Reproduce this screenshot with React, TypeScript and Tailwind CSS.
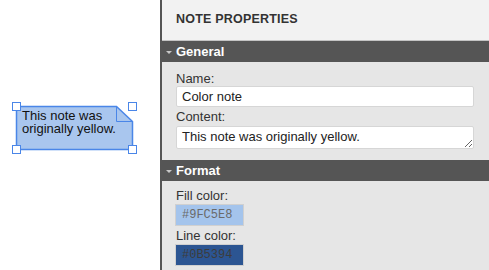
import React from 'react';

const font = { fontFamily: '"Liberation Sans", Arial, sans-serif' };
const mono = { fontFamily: '"Liberation Mono", "Courier New", monospace' };

const SectionBar = ({ title }: { title: string }) => (
  <div className="flex h-[21px] items-center bg-[#555555] pl-[3px]">
    <svg width="8" height="5" viewBox="0 0 8 5" className="mr-[3px] mt-[1px]">
      <path d="M1 1 L7 1 L4 4 Z" fill="#c8c8c8" />
    </svg>
    <span className="text-[13px] font-bold leading-none text-white">{title}</span>
  </div>
);

const NoteCanvas = () => (
  <div className="relative h-full w-[160px] bg-white">
    <svg width="160" height="270" className="absolute left-0 top-0">
      <path
        d="M16.5 106.5 L116.5 106.5 L132.5 121.5 L132.5 149.5 L16.5 149.5 Z"
        fill="#a9c6ee"
        stroke="#4a86e8"
        strokeWidth="1.5"
      />
      <path d="M116.5 106.5 L116.5 121.5 L132.5 121.5" fill="none" stroke="#4a86e8" strokeWidth="1" />
      {[
        [16.5, 106.5],
        [132.5, 106.5],
        [16.5, 149.5],
        [132.5, 149.5],
      ].map(([x, y], i) => (
        <rect key={i} x={x - 4} y={y - 4} width="8" height="8" fill="white" stroke="#4a86e8" strokeWidth="1" />
      ))}
    </svg>
    <div className="absolute left-[22px] top-[109px] w-[104px] text-[13px] leading-[13px] text-[#111]">
      This note was originally yellow.
    </div>
  </div>
);

export default function App() {
  return (
    <div className="flex h-[270px] w-[489px] overflow-hidden" style={font}>
      <NoteCanvas />
      <div className="w-[2px] bg-[#555555]" />
      <div className="flex flex-1 flex-col bg-[#e6e6e6]">
        <div className="flex h-[41px] items-center border-b border-[#c4c4c4] bg-[#f2f2f2] pl-[14px] pb-[1px]">
          <span className="text-[12.5px] font-bold tracking-[0.2px] text-[#333]">NOTE PROPERTIES</span>
        </div>
        <SectionBar title="General" />
        <div className="flex flex-col pl-[14px] pr-[15px] pt-[10px]">
          <label className="h-[14px] text-[13px] leading-[14px] text-[#333]">Name:</label>
          <input
            readOnly
            value="Color note"
            className="h-[21px] rounded-[2px] border border-[#d6d6d6] bg-white px-[5px] text-[13px] text-[#222] outline-none"
          />
          <label className="mt-[3px] h-[14px] text-[13px] leading-[14px] text-[#333]">Content:</label>
          <textarea
            readOnly
            value="This note was originally yellow."
            className="mt-[2px] h-[23px] rounded-[2px] border border-[#d6d6d6] bg-white px-[5px] pt-[2px] text-[13px] leading-[16px] text-[#222] outline-none"
          />
        </div>
        <div className="mt-[11px]">
          <SectionBar title="Format" />
        </div>
        <div className="flex flex-col items-start pl-[14px] pt-[8px]">
          <label className="h-[14px] text-[13px] leading-[14px] text-[#333]">Fill color:</label>
          <div
            className="-ml-[1px] mt-[1px] flex h-[22px] w-[69px] items-center border border-[#d0d0d0] bg-[#a4c4ec] pl-[6px] text-[12px] text-[#6a6a6a]"
            style={mono}
          >
            #9FC5E8
          </div>
          <label className="mt-[3px] h-[14px] text-[13px] leading-[14px] text-[#333]">Line color:</label>
          <div
            className="-ml-[1px] mt-[1px] flex h-[22px] w-[69px] items-center border border-[#d0d0d0] bg-[#2c5592] pl-[6px] text-[12px] text-[#3c3c3c]"
            style={mono}
          >
            #0B5394
          </div>
        </div>
      </div>
    </div>
  );
}
